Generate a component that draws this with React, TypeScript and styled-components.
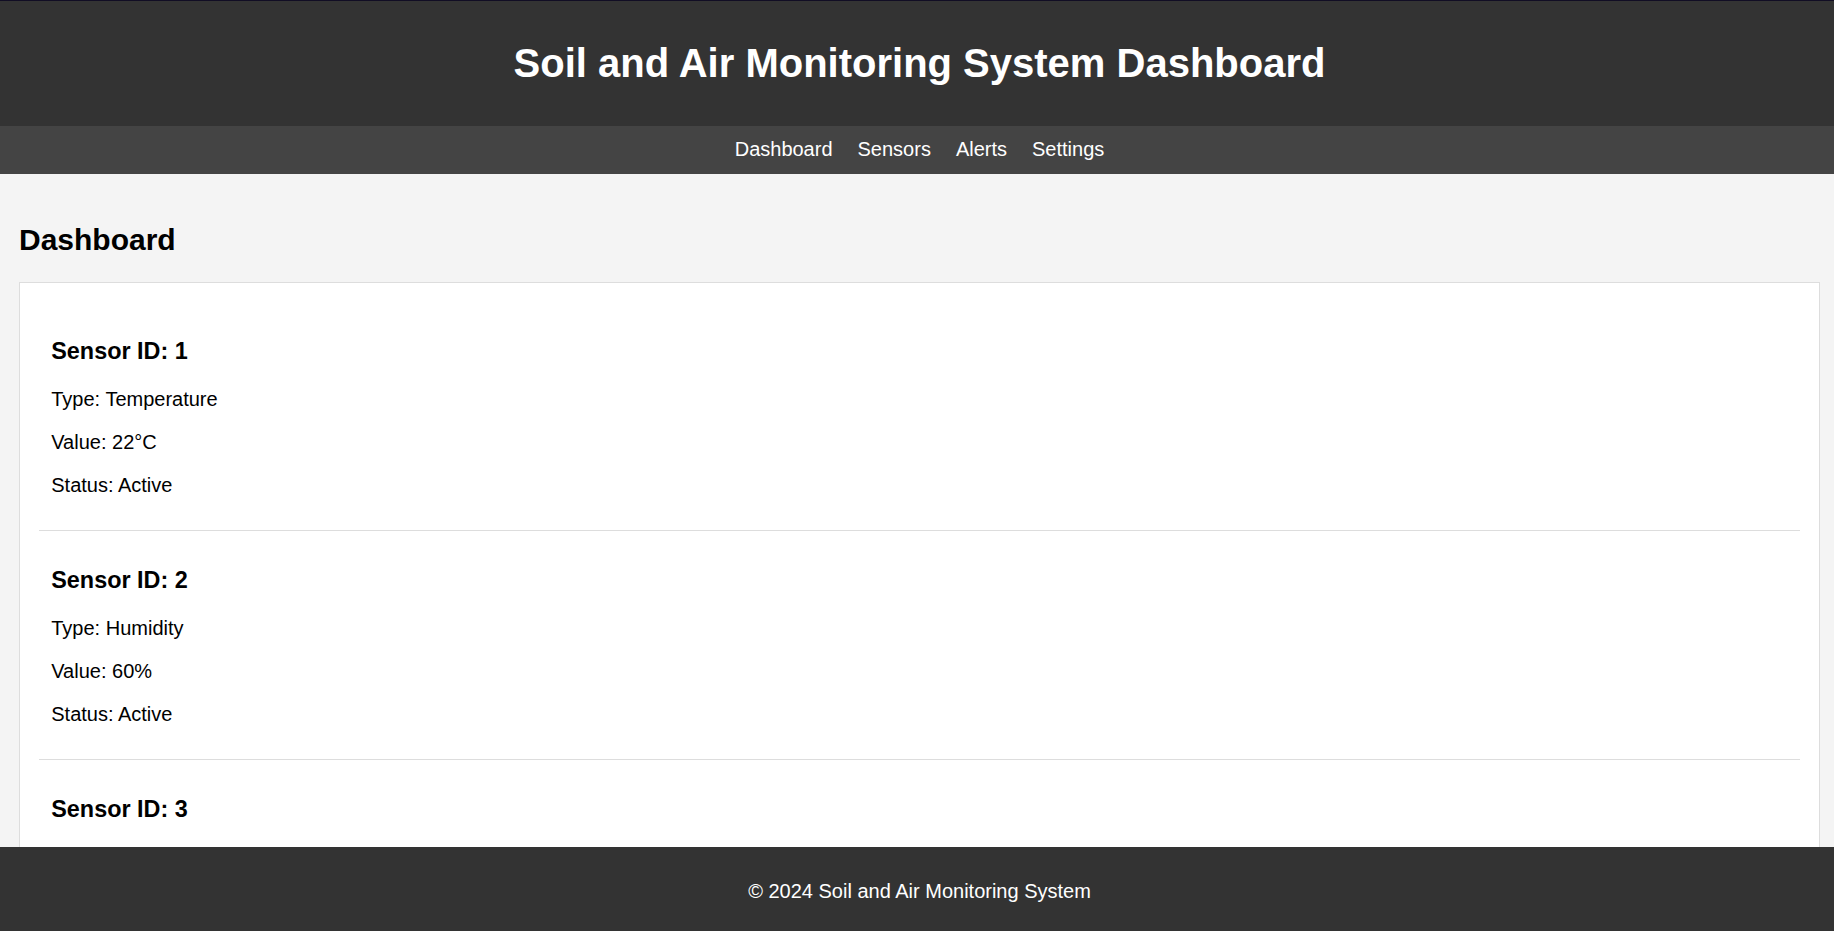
import React from "react";
import styled, { createGlobalStyle } from "styled-components";

const GlobalStyle = createGlobalStyle`
  html, body {
    margin: 0;
    padding: 0;
    height: 100%;
    overflow: hidden;
  }
  body {
    font-family: "Liberation Sans", Arial, Helvetica, sans-serif;
    background: #f4f4f4;
    color: #000;
  }
  * { box-sizing: border-box; }
`;

const Page = styled.div`
  height: 100vh;
  display: flex;
  flex-direction: column;
  overflow: hidden;
`;

const Header = styled.header`
  flex: none;
  background: #333;
  border-top: 1px solid #110d24;
  padding: 39px 0 40px 5px;
  text-align: center;
`;

const Title = styled.h1`
  margin: 0;
  font-size: 40px;
  line-height: 46px;
  font-weight: 700;
  color: #fff;
`;

const Nav = styled.nav`
  flex: none;
  background: #444;
  padding: 12px 0 13px 5px;
  display: flex;
  justify-content: center;
  gap: 25px;
`;

const NavLink = styled.a`
  color: #fff;
  text-decoration: none;
  font-size: 20px;
  line-height: 23px;
  cursor: pointer;
`;

const Main = styled.main`
  flex: 1;
  min-height: 0;
  overflow: hidden;
  padding: 0 14px 0 19px;
`;

const PageTitle = styled.h2`
  margin: 48px 0 25px;
  font-size: 30px;
  line-height: 35px;
  font-weight: 700;
`;

const Card = styled.section`
  background: #fff;
  border: 1px solid #ddd;
  padding: 18.25px 18.75px 18.75px;
`;

const SensorItem = styled.div`
  padding: 13px 12.5px 12.5px;
  border-bottom: 1px solid #ddd;
`;

const SensorTitle = styled.h3`
  margin: 23.4px 0;
  font-size: 23.4px;
  line-height: 27px;
  font-weight: 700;
`;

const SensorLine = styled.p`
  margin: 20px 0;
  font-size: 20px;
  line-height: 23px;
`;

const Footer = styled.footer`
  flex: none;
  height: 84px;
  background: #333;
  color: #fff;
  text-align: center;
  padding: 33px 0 0 5px;
  font-size: 20px;
  line-height: 23px;
`;

type Sensor = { id: number; type: string; value: string; status: string };

const sensors: Sensor[] = [
  { id: 1, type: "Temperature", value: "22°C", status: "Active" },
  { id: 2, type: "Humidity", value: "60%", status: "Active" },
  { id: 3, type: "Soil Moisture", value: "35%", status: "Active" },
];

export default function App() {
  return (
    <>
      <GlobalStyle />
      <Page>
        <Header>
          <Title>Soil and Air Monitoring System Dashboard</Title>
        </Header>
        <Nav>
          <NavLink>Dashboard</NavLink>
          <NavLink>Sensors</NavLink>
          <NavLink>Alerts</NavLink>
          <NavLink>Settings</NavLink>
        </Nav>
        <Main>
          <PageTitle>Dashboard</PageTitle>
          <Card>
            {sensors.map((s) => (
              <SensorItem key={s.id}>
                <SensorTitle>Sensor ID: {s.id}</SensorTitle>
                <SensorLine>Type: {s.type}</SensorLine>
                <SensorLine>Value: {s.value}</SensorLine>
                <SensorLine>Status: {s.status}</SensorLine>
              </SensorItem>
            ))}
          </Card>
        </Main>
        <Footer>© 2024 Soil and Air Monitoring System</Footer>
      </Page>
    </>
  );
}
